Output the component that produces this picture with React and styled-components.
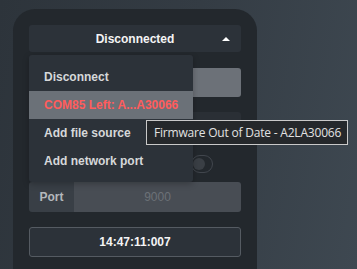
import React from 'react'
import styled, { createGlobalStyle } from 'styled-components'

const GlobalStyle = createGlobalStyle`
  html, body {
    margin: 0;
    padding: 0;
    height: 100%;
    overflow: hidden;
  }
  body {
    background: linear-gradient(100deg, #2d343b 0%, #343c44 50%, #3e4851 100%);
    font-family: "Liberation Sans", Arial, sans-serif;
  }
`

const Page = styled.div`
  position: relative;
  width: 357px;
  height: 269px;
  padding: 9px 0 0 13px;
  box-sizing: border-box;
  overflow: hidden;
`

const Panel = styled.div`
  width: 244px;
  height: 290px;
  box-sizing: border-box;
  padding: 16px;
  background: #23282d;
  border-radius: 22px;
  display: flex;
  flex-direction: column;
`

const DropWrap = styled.div`
  position: relative;
  z-index: 2;
`

const DropButton = styled.div`
  position: relative;
  height: 27px;
  border-radius: 3px;
  background: #2c3239;
  color: #f4f4f4;
  font-weight: bold;
  font-size: 12px;
  display: flex;
  align-items: center;
  justify-content: center;
`

const Caret = styled.span`
  position: absolute;
  right: 11px;
  top: 12px;
  width: 0;
  height: 0;
  border-left: 4px solid transparent;
  border-right: 4px solid transparent;
  border-bottom: 4px solid #ffffff;
`

const Menu = styled.div`
  position: absolute;
  top: 30px;
  left: 0;
  width: 164px;
  padding: 8px 0 7px;
  background: #2c3239;
  border-radius: 3px;
  box-shadow: 0 2px 6px rgba(0, 0, 0, 0.25);
`

const MenuItem = styled.div`
  height: 28px;
  padding-left: 15px;
  display: flex;
  align-items: center;
  font-size: 12px;
  font-weight: bold;
  color: ${p => (p.$warn ? '#ff5c5c' : '#d6d8da')};
  background: ${p => (p.$active ? '#6b7178' : 'transparent')};
`

const GreyField = styled.div`
  margin-top: 16px;
  height: 29px;
  border-radius: 3px;
  background: #6c7178;
`

const DarkField = styled.div`
  margin-top: 15px;
  height: 32px;
  border-radius: 3px;
  background: #2a2f35;
`

const ToggleRow = styled.div`
  margin-top: 11px;
  height: 18px;
  display: flex;
  justify-content: flex-end;
  padding-right: 28px;
`

const Toggle = styled.div`
  width: 19px;
  height: 16px;
  border: 1px solid #41464d;
  border-radius: 9px;
  display: flex;
  align-items: center;
  padding-left: 1px;

  &::before {
    content: '';
    width: 12px;
    height: 12px;
    border-radius: 50%;
    background: #3a3f45;
  }
`

const PortRow = styled.div`
  margin-top: 9px;
  height: 30px;
  border-radius: 3px;
  overflow: hidden;
  display: flex;
`

const PortLabel = styled.div`
  width: 45px;
  background: #393f46;
  color: #b4b8bc;
  font-size: 12px;
  font-weight: bold;
  display: flex;
  align-items: center;
  justify-content: center;
`

const PortInput = styled.div`
  flex: 1;
  background: #484d54;
  color: #6c7177;
  font-size: 12px;
  display: flex;
  align-items: center;
  justify-content: center;
`

const TimeBox = styled.div`
  margin-top: 15px;
  height: 30px;
  box-sizing: border-box;
  border: 1px solid #555b62;
  border-radius: 3px;
  background: #2c3239;
  color: #f4f4f4;
  font-size: 12px;
  font-weight: bold;
  display: flex;
  align-items: center;
  justify-content: center;
`

const Tooltip = styled.div`
  position: absolute;
  left: 146px;
  top: 120px;
  width: 202px;
  height: 25px;
  box-sizing: border-box;
  border: 1px solid #c9c9c9;
  background: #25282b;
  color: #e2e2e2;
  font-family: "Open Sans", "Noto Sans", sans-serif;
  font-size: 12px;
  letter-spacing: -0.2px;
  display: flex;
  align-items: center;
  padding-left: 7px;
  white-space: nowrap;
  z-index: 3;
`

const menuItems = [
  { label: 'Disconnect' },
  { label: 'COM85 Left: A...A30066', warn: true, active: true },
  { label: 'Add file source' },
  { label: 'Add network port' },
]

export default function App() {
  return (
    <>
      <GlobalStyle />
      <Page>
        <Panel>
          <DropWrap>
            <DropButton>
              Disconnected
              <Caret />
            </DropButton>
            <Menu>
              {menuItems.map(item => (
                <MenuItem key={item.label} $warn={item.warn} $active={item.active}>
                  {item.label}
                </MenuItem>
              ))}
            </Menu>
          </DropWrap>
          <GreyField />
          <DarkField />
          <ToggleRow>
            <Toggle />
          </ToggleRow>
          <PortRow>
            <PortLabel>Port</PortLabel>
            <PortInput>9000</PortInput>
          </PortRow>
          <TimeBox>14:47:11:007</TimeBox>
        </Panel>
        <Tooltip>Firmware Out of Date - A2LA30066</Tooltip>
      </Page>
    </>
  )
}
